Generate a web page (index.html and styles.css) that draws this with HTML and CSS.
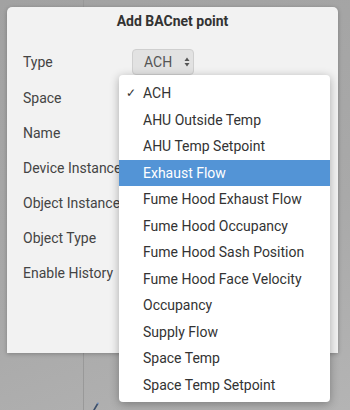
FILE: index.html
```html
<!DOCTYPE html>
<html>
<head>
<meta charset="utf-8">
<title>Add BACnet point</title>
<link rel="stylesheet" href="styles.css">
</head>
<body>

<div class="app">
    <div class="sidebar"></div>
    <div class="main">
        <svg class="pencil" width="6" height="8" viewBox="0 0 6 8">
            <path d="M1 8 L4.5 2" stroke="#3b4e6a" stroke-width="1.6" stroke-linecap="round"/>
            <path d="M4.5 2 L5.4 0.6" stroke="#6f8fc0" stroke-width="1.4"/>
        </svg>
    </div>
</div>

<div class="dialog">
    <div class="dialog-title">Add BACnet point</div>
    <div class="form">
        <div class="row row-first">
            <label>Type</label>
            <div class="select-btn">
                ACH
                <svg class="arrows" width="6" height="10" viewBox="0 0 6 10">
                    <path d="M3 0.5 L5.5 4 L0.5 4 Z" fill="#555"/>
                    <path d="M3 9.5 L5.5 6 L0.5 6 Z" fill="#555"/>
                </svg>
            </div>
        </div>
        <div class="row"><label>Space</label></div>
        <div class="row"><label>Name</label></div>
        <div class="row"><label>Device Instance</label></div>
        <div class="row"><label>Object Instance</label></div>
        <div class="row"><label>Object Type</label></div>
        <div class="row"><label>Enable History</label></div>
    </div>
</div>

<ul class="menu">
    <li class="checked">ACH</li>
    <li>AHU Outside Temp</li>
    <li>AHU Temp Setpoint</li>
    <li class="active">Exhaust Flow</li>
    <li>Fume Hood Exhaust Flow</li>
    <li>Fume Hood Occupancy</li>
    <li>Fume Hood Sash Position</li>
    <li>Fume Hood Face Velocity</li>
    <li>Occupancy</li>
    <li>Supply Flow</li>
    <li>Space Temp</li>
    <li>Space Temp Setpoint</li>
</ul>

</body>
</html>
```

FILE: styles.css
```css
html, body {
    margin: 0;
    padding: 0;
    height: 100%;
}
body {
    font-family: Roboto, "Noto Sans", sans-serif;
    font-size: 14px;
    color: #3a3a3a;
    overflow: hidden;
}
.app {
    display: flex;
    height: 100%;
    background: linear-gradient(160deg, #a2a2a2 0%, #a9a9a9 60%, #b4b4b4 100%);
}
.sidebar {
    width: 83px;
    border-right: 1px solid #999;
}
.main {
    flex: 1;
    position: relative;
}
.pencil {
    position: absolute;
    left: 9px;
    bottom: 0;
}
.dialog {
    position: absolute;
    left: 7px;
    top: 7px;
    width: 331px;
    height: 346px;
    background: #f2f2f2;
    border-radius: 5px 5px 0 0;
    box-shadow: 0 1px 4px rgba(0, 0, 0, 0.25);
}
.dialog-title {
    text-align: center;
    font-weight: bold;
    color: #333;
    padding-top: 4px;
    height: 26px;
    line-height: 20px;
}
.form {
    padding: 6px 0 0 16px;
}
.row {
    display: flex;
    align-items: center;
    height: 35px;
}
.row-first {
    height: 37px;
}
.row label {
    width: 109px;
    white-space: nowrap;
    color: #444;
}
.select-btn {
    display: flex;
    align-items: center;
    box-sizing: border-box;
    width: 62px;
    height: 26px;
    padding-left: 11px;
    background: #e2e2e2;
    border: 1px solid #cfcfcf;
    border-radius: 4px;
    color: #555;
}
.arrows {
    margin-left: 12px;
}
.menu {
    position: absolute;
    left: 119px;
    top: 75px;
    width: 211px;
    margin: 0;
    padding: 5px 0 4px;
    list-style: none;
    background: #fff;
    border-radius: 4px;
    box-shadow: 0 2px 10px rgba(0, 0, 0, 0.3);
}
.menu li {
    height: 26.5px;
    line-height: 26.5px;
    padding-left: 24px;
    color: #333;
    white-space: nowrap;
    position: relative;
}
.menu li.checked::before {
    content: "\2713";
    position: absolute;
    left: 7px;
    font-size: 12px;
}
.menu li.active {
    background: #5394d6;
    color: #fff;
}
```
